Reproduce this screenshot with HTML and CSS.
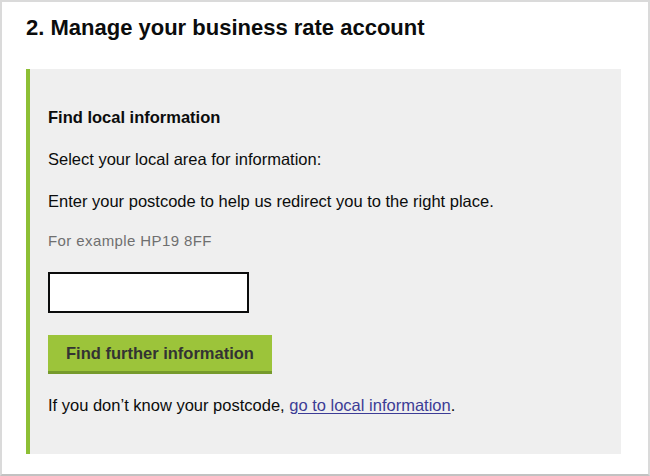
FILE: index.html
```html
<!DOCTYPE html>
<html lang="en">
<head>
<meta charset="utf-8">
<title>Manage your business rate account</title>
<link rel="stylesheet" href="styles.css">
</head>
<body>
<div class="frame">
  <h2 class="title">2. Manage your business rate account</h2>
  <section class="panel">
    <h3 class="panel-title">Find local information</h3>
    <p class="text">Select your local area for information:</p>
    <p class="text">Enter your postcode to help us redirect you to the right place.</p>
    <p class="hint">For example HP19 8FF</p>
    <input class="postcode" type="text" aria-label="Postcode">
    <button class="btn" type="button">Find further information</button>
    <p class="text last">If you don’t know your postcode, <a href="#" class="link">go to local information</a>.</p>
  </section>
</div>
</body>
</html>
```

FILE: styles.css
```css
html, body {
  margin: 0;
  padding: 0;
  background: #ffffff;
}

body {
  font-family: "Liberation Sans", Arial, Helvetica, sans-serif;
  color: #0b0c0c;
}

.frame {
  box-sizing: border-box;
  width: 650px;
  height: 476px;
  border: 2px solid #dadada;
  border-bottom-color: #c2c2c2;
  padding: 12px 27px 20px 24px;
  display: flex;
  flex-direction: column;
}

.title {
  margin: 0 0 27px 0;
  font-size: 22px;
  line-height: 28px;
  font-weight: bold;
  color: #0b0c0c;
}

.panel {
  flex: 1;
  background: #efefef;
  border-left: 4px solid #8dbf35;
  padding: 36px 20px 0 18px;
  display: flex;
  flex-direction: column;
  align-items: flex-start;
}

.panel-title {
  margin: 0;
  font-size: 16.5px;
  line-height: 24px;
  font-weight: bold;
}

.text {
  margin: 18px 0 0 0;
  font-size: 16.5px;
  line-height: 24px;
}

.hint {
  margin: 18px 0 0 0;
  font-size: 15px;
  letter-spacing: 0.4px;
  line-height: 20px;
  color: #6f6f6f;
}

.postcode {
  box-sizing: border-box;
  margin: 21px 0 0 0;
  width: 201px;
  height: 41px;
  border: 2px solid #0b0c0c;
  background: #ffffff;
  padding: 4px 6px;
  font-family: inherit;
  font-size: 16px;
  outline: none;
}

.btn {
  box-sizing: border-box;
  margin: 22px 0 0 0;
  height: 39px;
  padding: 0 18px;
  border: 0;
  border-bottom: 3px solid #769a2c;
  background: #9cc43a;
  color: #333333;
  font-family: inherit;
  font-size: 16.5px;
  font-weight: bold;
  line-height: 36px;
  cursor: pointer;
}

.last {
  margin-top: 19px;
}

.link {
  color: #3c3c96;
  text-decoration: underline;
  text-underline-offset: 2px;
}
```
